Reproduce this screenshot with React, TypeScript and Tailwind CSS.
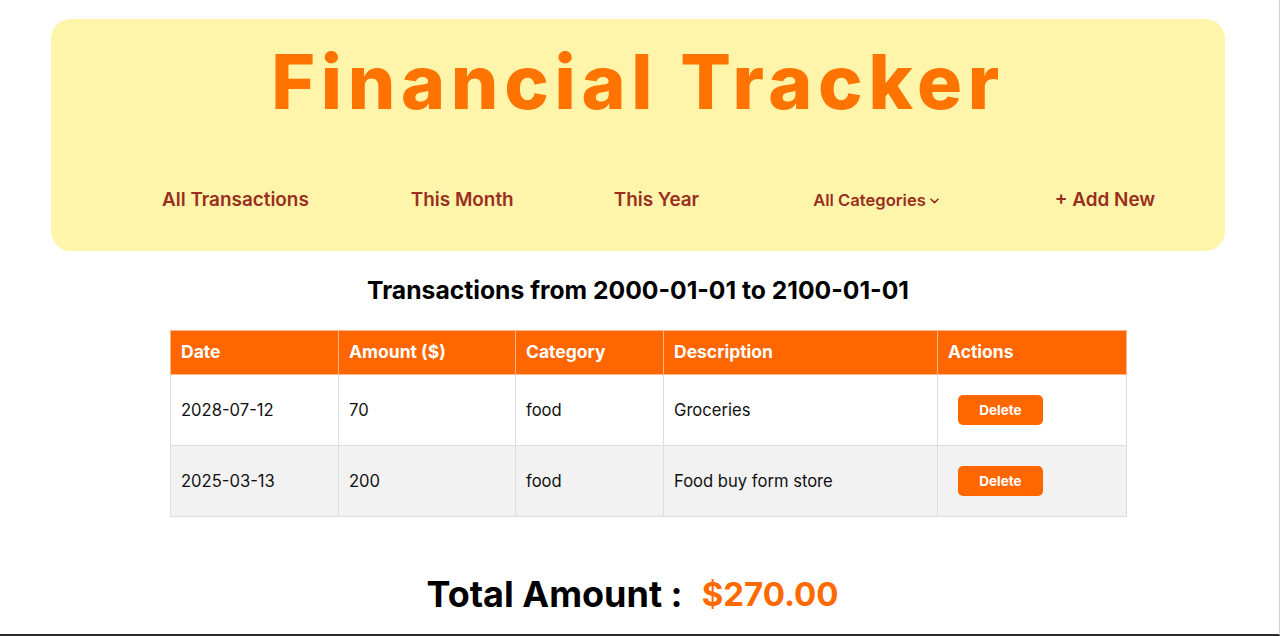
import React from "react";

type Tx = { date: string; amount: string; category: string; description: string };

const rows: Tx[] = [
  { date: "2028-07-12", amount: "70", category: "food", description: "Groceries" },
  { date: "2025-03-13", amount: "200", category: "food", description: "Food buy form store" },
];

function Chevron() {
  return (
    <svg width="9" height="6" viewBox="0 0 9 6" className="ml-[4px] mt-[2px]" fill="none">
      <path d="M1 1.2 L4.5 4.6 L8 1.2" stroke="#9a2e1f" strokeWidth="1.6" strokeLinecap="round" strokeLinejoin="round" />
    </svg>
  );
}

export default function App() {
  return (
    <div className="h-[636px] w-[1280px] overflow-hidden border-r border-b-2 border-r-[#d0d0d0] border-b-[#2b2b2b] bg-white font-['Inter',sans-serif] text-[#111]">
      <header className="ml-[51px] mt-[19px] flex h-[232px] w-[1174px] flex-col rounded-[20px] bg-[#fef5aa] pt-[27px]">
        <h1 className="text-center text-[75px] font-extrabold leading-[72px] tracking-[5.7px] text-[#ff7300]">
          Financial Tracker
        </h1>
        <nav className="mt-[68px] flex items-center pl-[111px] text-[18.9px] font-semibold leading-[28px] text-[#9a2e1f]">
          <span>All Transactions</span>
          <span className="ml-[102px]">This Month</span>
          <span className="ml-[100px]">This Year</span>
          <span className="ml-[114px] flex items-center text-[16.6px]">
            All Categories
            <Chevron />
          </span>
          <span className="ml-[116px]">+ Add New</span>
        </nav>
      </header>

      <h2 className="mt-[23px] pr-[3px] text-center text-[24.7px] font-bold leading-[32px] text-black">
        Transactions from 2000-01-01 to 2100-01-01
      </h2>

      <table className="ml-[170px] mt-[24px] w-[956px] table-fixed border-collapse text-left">
        <thead>
          <tr className="h-[44px] bg-[#ff6600] text-[17.5px] font-bold text-white">
            <th className="w-[168px] border border-[#f7b68a] px-[10px] font-bold">Date</th>
            <th className="w-[177px] border border-[#f7b68a] px-[10px] font-bold">Amount ($)</th>
            <th className="w-[148px] border border-[#f7b68a] px-[10px] font-bold">Category</th>
            <th className="w-[274px] border border-[#f7b68a] px-[10px] font-bold">Description</th>
            <th className="w-[189px] border border-[#f7b68a] px-[10px] font-bold">Actions</th>
          </tr>
        </thead>
        <tbody className="text-[16.6px]">
          {rows.map((r, i) => (
            <tr key={r.date} className={i % 2 === 1 ? "h-[71px] bg-[#f2f2f2]" : "h-[71px] bg-white"}>
              <td className="border border-[#dddddd] px-[10px]">{r.date}</td>
              <td className="border border-[#dddddd] px-[10px]">{r.amount}</td>
              <td className="border border-[#dddddd] px-[10px]">{r.category}</td>
              <td className="border border-[#dddddd] px-[10px]">{r.description}</td>
              <td className="border border-[#dddddd] px-[20px]">
                <button className="flex h-[30px] w-[85px] items-center justify-center rounded-[5px] bg-[#ff6600] text-[13.5px] font-bold text-white">
                  Delete
                </button>
              </td>
            </tr>
          ))}
        </tbody>
      </table>

      <div className="mt-[57px] flex items-center justify-center pr-[14px] leading-[40px]">
        <span className="text-[36px] font-bold text-black">Total Amount :</span>
        <span className="ml-[19px] text-[33px] font-bold text-[#ff6a00]">$270.00</span>
      </div>
    </div>
  );
}
